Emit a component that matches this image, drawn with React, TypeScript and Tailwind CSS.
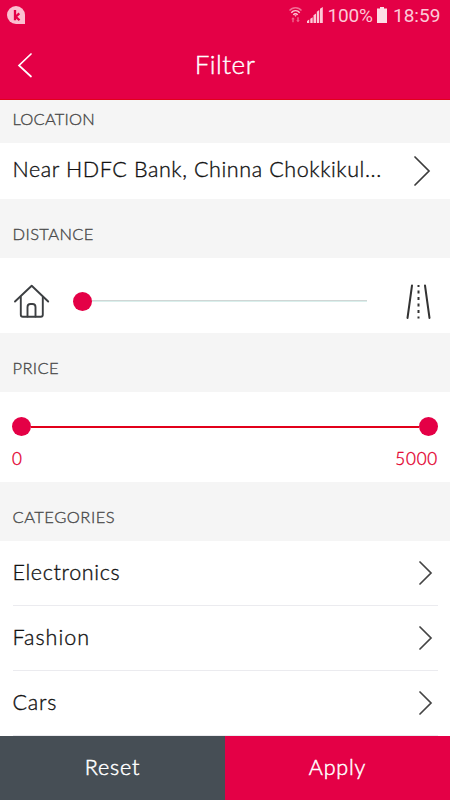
import React from "react";

type ChevronProps = { className: string; points: string; viewBox: string };

function Chevron({ className, points, viewBox }: ChevronProps) {
  return (
    <svg className={className} viewBox={viewBox} fill="none" stroke="currentColor" strokeWidth="1.7" strokeLinecap="round" strokeLinejoin="miter">
      <polyline points={points} />
    </svg>
  );
}

function SectionHeader({ children, className }: { children: React.ReactNode; className: string }) {
  return (
    <h2 className={`flex shrink-0 items-start bg-[#f5f5f5] pl-[12.5px] text-[16.5px] leading-5 font-light text-[#4a4a4a] [-webkit-text-stroke:0.35px] ${className}`}>
      {children}
    </h2>
  );
}

function StatusBar() {
  return (
    <div className="flex h-[30px] items-start pl-[7px] pr-[10px] text-[#fcc9d7]">
      <svg className="mt-[6px] h-[18px] w-[18px]" viewBox="0 0 18 18">
        <path d="M9 0a9 9 0 1 0 0 18h9V9a9 9 0 0 0-9-9z" fill="#fbbfd0" />
        <path d="M8 4v10.300M12.300 7.400 8.800 10.700l3.700 3.600" fill="none" stroke="#e40046" strokeWidth="2.3" />
      </svg>
      <div className="ml-auto flex items-start">
        <svg className="mr-[5px] mt-[7px] h-4 w-[13px]" viewBox="0 0 13 16" fill="none" stroke="currentColor" strokeWidth="1.4">
          <path d="M.5 3.5C3.5-.2 9.5-.2 12.5 3.5" opacity=".55" />
          <path d="M2.3 5.7c2.2-2.8 6.2-2.8 8.4 0" />
          <path d="M4.3 7.9c1.2-1.5 3.2-1.5 4.4 0" />
          <path d="M5.3 8.3h2.4L6.5 9.8z" fill="currentColor" stroke="none" />
          <path d="M2.2 12.2 4 10.3l1.800 1.900H4.700v3H3.300v-3zM7.200 13.200h1.100v-3h1.400v3h1.100L9 15.200z" fill="currentColor" stroke="none" opacity=".5" />
        </svg>
        <svg className="mt-[7px] h-4 w-4" viewBox="0 0 16 16" fill="currentColor">
          <path d="M0 14l2.2-1.4V16H0zM3.3 11.8l2.4-1.5V16H3.3zM6.5 8.2 9 6.4V16H6.5zM9.8 4.8l2.4-1.7V16H9.8zM13 1.8 15.8 0v16H13z" />
        </svg>
        <span className="ml-[4.500px] mr-[0.500px] mt-[5px] w-[45px] whitespace-nowrap font-[Roboto,sans-serif] text-[19px] leading-[21px] tracking-[-0.2px]">100%</span>
        <svg className="ml-[4px] mt-[7px] h-4 w-[10px]" viewBox="0 0 10 16" fill="#fddde6">
          <path d="M3 0h4v1.5h3V16H0V1.500h3z" />
        </svg>
        <span className="ml-[6px] mt-[5px] w-[47px] whitespace-nowrap font-[Roboto,sans-serif] text-[19px] leading-[21px]">18:59</span>
      </div>
    </div>
  );
}

function CategoryRow({ name, className }: { name: string; className: string }) {
  return (
    <li className="ml-[12.5px] mr-[12px] flex h-[65px] shrink-0 items-center border-b border-[#ebebef] text-[21.5px] leading-6 font-light text-[#111] [-webkit-text-stroke:0.35px]">
      <span className={`mb-[2px] ${className}`}>{name}</span>
      <Chevron className="ml-auto mr-[5px] mb-px h-6 w-[15px] text-[#444]" viewBox="0 0 15 24" points="2,1 13,12 2,23" />
    </li>
  );
}

export default function App() {
  return (
    <main className="flex h-[800px] w-[450px] flex-col overflow-hidden bg-white font-[Lato,sans-serif]">
      <header className="h-[100px] shrink-0 border-b border-[#e2001b] bg-[#e40046] text-white">
        <StatusBar />
        <div className="grid h-[69px] grid-cols-[50px_1fr_50px] items-center">
          <Chevron className="ml-[17px] h-[26px] w-4" viewBox="0 0 16 26" points="14,2 2,13.500 14,24.500" />
          <h1 className="pb-px text-center text-[26px] leading-8 font-light tracking-[0.5px] [-webkit-text-stroke:0.4px]">Filter</h1>
        </div>
      </header>

      <SectionHeader className="h-[43px] pt-[9px] tracking-[0.2px]">LOCATION</SectionHeader>
      <div className="flex h-14 shrink-0 items-center pl-[12.5px] text-[21.5px] font-light text-[#111]">
        <span className="mb-[4px] whitespace-nowrap tracking-[0.6px] [-webkit-text-stroke:0.35px]">Near HDFC Bank, Chinna Chokkikul...</span>
        <Chevron className="ml-auto mr-[19px] h-[30px] w-[18px] text-[#3c3c3c]" viewBox="0 0 18 30" points="2,1 16,15 2,29" />
      </div>

      <SectionHeader className="h-[59px] pt-[25px] tracking-[0.4px]">DISTANCE</SectionHeader>
      <div className="flex h-[75px] shrink-0 items-center pl-[13px] pr-[18px]">
        <svg className="mt-[11px] h-[35px] w-[37px]" viewBox="0 0 37 35" fill="none" stroke="#3c3f42" strokeWidth="1.9" strokeLinecap="round" strokeLinejoin="round">
          <path d="M2 17.500 18.700 1.800 35.200 17.500" />
          <path d="M7.800 13v17.700a2 2 0 0 0 2 2h18a2 2 0 0 0 2-2V13" />
          <path d="M14.500 32.500V23a3 3 0 0 1 3-3h2a3 3 0 0 1 3 3v9.500" />
        </svg>
        <div className="ml-[23px] mt-[11px] flex items-center">
          <span className="h-[19px] w-[19px] rounded-full bg-[#e40046]" />
          <span className="h-[2px] w-[275px] border-b border-[#d9efec] bg-[#d0d6d5]" />
        </div>
        <svg className="ml-auto mr-px mt-[11px] h-[36px] w-[25px]" viewBox="0 0 25 36" fill="none" stroke="#333" strokeWidth="2" strokeLinecap="round">
          <path d="M6 2.500 1.500 35M19 2.500 23.500 35" />
          <path d="M12.500 2v33.500" strokeDasharray="3 3.500" strokeDashoffset="1" strokeLinecap="butt" />
        </svg>
      </div>

      <SectionHeader className="h-[59px] pt-[25px] tracking-[0.4px]">PRICE</SectionHeader>
      <div className="h-[90px] shrink-0 px-[12px] pt-[25px] text-[#e3002e]">
        <div className="flex items-center">
          <span className="h-[19px] w-[19px] rounded-full bg-[#e40046]" />
          <span className="h-[2px] flex-1 bg-[#e2001b]" />
          <span className="h-[19px] w-[19px] rounded-full bg-[#e40046]" />
        </div>
        <div className="mt-[13px] flex justify-between text-[17px] leading-5 font-light [-webkit-text-stroke:0.35px]">
          <span>0</span>
          <span className="tracking-[0.8px]">5000</span>
        </div>
      </div>

      <SectionHeader className="h-[59px] pt-[25px] tracking-[0.5px]">CATEGORIES</SectionHeader>
      <ul className="flex h-[195px] shrink-0 flex-col">
        <CategoryRow name="Electronics" className="tracking-[0.65px]" />
        <CategoryRow name="Fashion" className="tracking-[1px]" />
        <CategoryRow name="Cars" className="tracking-[0.8px]" />
      </ul>

      <footer className="grid h-16 shrink-0 grid-cols-2 text-[21.5px] font-light text-white [-webkit-text-stroke:0.5px]">
        <button className="bg-[#464e55] pb-[2px] tracking-[0.8px]">Reset</button>
        <button className="bg-[#e40046] pb-[2px] tracking-[0.8px]">Apply</button>
      </footer>
    </main>
  );
}
